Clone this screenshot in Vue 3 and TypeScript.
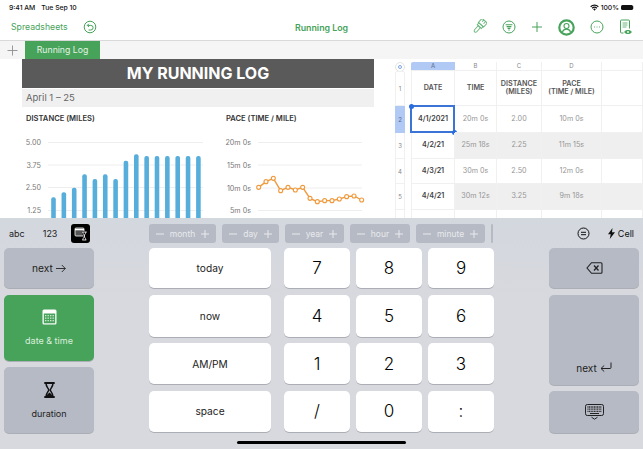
<template>
  <div class="ipad">
    <div class="status">
      <span>9:41 AM</span>
      <span class="date">Tue Sep 10</span>
      <span class="status-right">
        <svg width="9" height="7" viewBox="0 0 11 8"><path d="M0.300 2.600a7.300 7.300 0 0 1 10.400 0l-1 1a5.900 5.900 0 0 0-8.400 0zM2.100 4.400a4.800 4.800 0 0 1 6.800 0l-1 1a3.400 3.400 0 0 0-4.800 0zM3.900 6.200a2.200 2.200 0 0 1 3.200 0L5.500 7.900z" fill="#111" /></svg>
        <span>100%</span>
        <span class="battery"></span>
      </span>
    </div>

    <div class="toolbar">
      <div class="tb-left">
        <span>Spreadsheets</span>
        <svg width="14" height="14" viewBox="0 0 14 14" fill="none" stroke="#47a35a" stroke-width="1">
          <circle cx="7" cy="7" r="5.800" />
          <path d="M4.400 5.400h3.400a2.200 2.200 0 0 1 0 4.600H5.600M5.900 3.800 4.300 5.400l1.600 1.600" />
        </svg>
      </div>
      <div class="tb-title">Running Log</div>
      <div class="tb-right">
        <svg width="16" height="16" viewBox="0 0 16 16" fill="none" stroke="#6fb87f" stroke-width="1">
          <g transform="rotate(42 8 8)">
            <path d="M4.500 -0.500h7v5.500h-7zM6.800 -0.500v2.500M9.200 -0.500v3" />
            <path d="M5.200 5h5.600v2.500H5.200z" />
            <path d="M6.500 7.500h3v5.500a1.500 1.500 0 0 1-3 0z" />
          </g>
        </svg>
        <svg width="14" height="14" viewBox="0 0 14 14" fill="none" stroke="#47a35a" stroke-width="1">
          <circle cx="7" cy="7" r="6" />
          <path d="M3.600 4.800h6.800M4.600 6.600h4.800M5.600 8.400h2.800M6.300 10h1.400" stroke-width="1.100" />
        </svg>
        <svg width="12" height="12" viewBox="0 0 12 12" stroke="#47a35a" stroke-width="1"><path d="M6 1v10M1 6h10" /></svg>
        <svg width="17" height="17" viewBox="0 0 17 17" fill="none" stroke="#47a35a">
          <circle cx="8.500" cy="8.500" r="7.200" stroke-width="2.200" />
          <circle cx="8.500" cy="7" r="2.500" stroke-width="1.100" />
          <path d="M4.400 13c.7-2 2.200-2.900 4.100-2.900s3.400.9 4.100 2.900" stroke-width="1.100" />
        </svg>
        <svg width="14" height="14" viewBox="0 0 14 14" fill="none" stroke="#47a35a" stroke-width="1">
          <circle cx="7" cy="7" r="6" />
          <path d="M4 7h.8M6.600 7h.8M9.200 7h.8" stroke-width="1.200" />
        </svg>
        <svg width="14" height="16" viewBox="0 0 14 16" fill="none" stroke="#47a35a" stroke-width="1">
          <path d="M4.500 14H2.500a1 1 0 0 1-1-1V2a1 1 0 0 1 1-1h7a1 1 0 0 1 1 1v7.500" />
          <path d="M3.500 4h5M3.500 6h5M3.500 8h4" stroke-width="0.800" />
          <path d="M5.500 13c1.200-2 5.800-2 7 0-1.200 2-5.800 2-7 0z" fill="#47a35a" />
          <circle cx="9" cy="13" r="0.900" fill="#fff" stroke="none" />
        </svg>
      </div>
    </div>

    <div class="tabs">
      <svg class="tab-plus" width="11" height="11" viewBox="0 0 11 11" stroke="#8e8e8e" stroke-width="0.900"><path d="M5.500 0.500v10M0.500 5.500h10" /></svg>
      <div class="tab">Running Log</div>
    </div>

    <div class="sheet">
      <div class="report">
        <h1>MY RUNNING LOG</h1>
        <div class="subtitle">April 1 – 25</div>
        <div class="charts">
          <div class="chart chart-dist">
            <h2>DISTANCE (MILES)</h2>
            <svg width="200" height="95" viewBox="22 125 200 95">
              <g v-for="t in distTicks" :key="t.label">
                <line x1="48" x2="203" :y1="t.y" :y2="t.y" stroke="#eeeeee" stroke-width="1" />
                <text x="41" :y="t.y + 2.700" text-anchor="end" class="tick">{{ t.label }}</text>
              </g>
              <rect v-for="b in bars" :key="b.x" :x="b.x - 2.300" :y="b.y" width="4.600" :height="230 - b.y" rx="2" fill="#57aedb" />
            </svg>
          </div>
          <div class="chart chart-pace">
            <h2>PACE (TIME / MILE)</h2>
            <svg width="152" height="95" viewBox="222 125 152 95">
              <g v-for="t in paceTicks" :key="t.label">
                <line x1="258" x2="362" :y1="t.y" :y2="t.y" stroke="#eeeeee" stroke-width="1" />
                <text x="251" :y="t.y + 2.700" text-anchor="end" class="tick">{{ t.label }}</text>
              </g>
              <polyline :points="pacePoints" fill="none" stroke="#f09a3e" stroke-width="1.400" />
              <circle v-for="p in pace" :key="p[0]" :cx="p[0]" :cy="p[1]" r="2" fill="#fff" stroke="#f09a3e" stroke-width="1.100" />
            </svg>
          </div>
        </div>
      </div>

      <div class="table-wrap">
        <div class="corner-row">
          <span class="corner"><i></i></span>
          <div class="cols">
            <span v-for="(c, i) in columns" :key="c" class="col-head" :class="{ on: i === 0 }">{{ c }}</span>
            <span class="col-head"></span>
          </div>
        </div>
        <div class="body">
          <div class="row-heads">
            <span v-for="(r, i) in rows" :key="i" class="row-head" :class="{ on: i === 1 }" :style="{ height: r.h + 'px' }">{{ r.n }}</span>
          </div>
          <div class="grid">
            <div v-for="(r, i) in rows" :key="i" class="row" :class="{ head: i === 0, shade: i === 2 || i === 4 }" :style="{ height: r.h + 'px' }">
              <div v-for="(c, j) in r.cells" :key="j" class="cell" :class="{ first: j === 0 }">
                <span>{{ c }}</span>
                <div v-if="i === 1 && j === 0" class="selection">
                  <i class="handle tl"></i>
                  <i class="handle br"></i>
                </div>
              </div>
              <div class="cell"></div>
            </div>
          </div>
        </div>
      </div>
    </div>

    <div class="keyboard">
      <div class="strip">
        <div class="modes">
          <span>abc</span>
          <span>123</span>
          <span class="mode-on">
            <svg width="15" height="14" viewBox="0 0 15 14" fill="none">
              <rect x="2" y="1" width="9" height="8" rx="1" fill="#555" stroke="#fff" stroke-width="0.800" />
              <path d="M2 2.600h9" stroke="#fff" stroke-width="1.400" />
              <path d="M8.800 5h5M9.300 13h4M9.800 5c0 2.200 1.700 2.500 1.700 4s-1.700 1.800-1.700 4M12.800 5c0 2.200-1.700 2.500-1.700 4s1.700 1.800 1.700 4" stroke="#000" stroke-width="2.200" />
              <path d="M8.800 5h5M9.300 13h4M9.800 5c0 2.200 1.700 2.500 1.700 4s-1.700 1.800-1.700 4M12.800 5c0 2.200-1.700 2.500-1.700 4s1.700 1.800 1.700 4" stroke="#fff" stroke-width="0.800" />
            </svg>
          </span>
        </div>
        <div class="chips">
          <div v-for="c in chips" :key="c.label" class="chip" :style="{ width: c.w + 'px' }">
            <svg width="8" height="8" viewBox="0 0 8 8" stroke="#e8eaee" stroke-width="1"><path d="M0 4h8" /></svg>
            <span>{{ c.label }}</span>
            <svg width="8" height="8" viewBox="0 0 8 8" stroke="#e8eaee" stroke-width="1"><path d="M0 4h8M4 0v8" /></svg>
          </div>
          <div class="chip-more"></div>
        </div>
        <div class="strip-right">
          <svg width="13" height="13" viewBox="0 0 13 13" fill="none" stroke="#111" stroke-width="1"><circle cx="6.500" cy="6.500" r="5.500" /><path d="M4 5.300h5M4 7.700h5" /></svg>
          <span class="cell-mode">
            <svg width="7" height="11" viewBox="0 0 7 11"><path d="M4.500 0 0 6.300h2.700L1.800 11 7 4.300H4z" fill="#111" /></svg>
            Cell
          </span>
        </div>
      </div>

      <div class="keys">
        <div class="side">
          <button class="key gray k40">
            next
            <svg width="10" height="9" viewBox="0 0 10 9" fill="none" stroke="#222" stroke-width="0.900"><path d="M0 4.500h9.300M5.800 1l3.500 3.500L5.800 8" /></svg>
          </button>
          <button class="key green tall">
            <svg width="15" height="16" viewBox="0 0 15 16">
              <rect x="0.500" y="0.500" width="14" height="15" rx="1.500" fill="#fff" />
              <rect x="1.800" y="4.500" width="11.400" height="9.800" fill="#47a35a" />
              <g fill="#cfe8d3">
                <rect v-for="d in calDots" :key="d[0] + '-' + d[1]" :x="d[0]" :y="d[1]" width="1.400" height="1.300" />
              </g>
            </svg>
            <span>date &amp; time</span>
          </button>
          <button class="key gray tall">
            <svg width="11" height="16" viewBox="0 0 11 16" fill="none" stroke="#111">
              <path d="M0.300 1h10.400M0.300 15h10.400" stroke-width="1.800" />
              <path d="M2 1c0 4.500 2.700 5.200 2.700 7S2 10.500 2 15M9 1c0 4.500-2.700 5.200-2.700 7S9 10.500 9 15" stroke-width="1.500" />
              <path d="M2.500 14.500c.5-2.500 2-3 3-4 1 1 2.500 1.500 3 4z" fill="#111" stroke="none" />
            </svg>
            <span>duration</span>
          </button>
        </div>

        <div class="words">
          <button v-for="w in words" :key="w.label" class="key white" :style="{ height: w.h + 'px' }">{{ w.label }}</button>
        </div>

        <div class="numpad">
          <button v-for="n in numbers" :key="n.label" class="key white num" :style="{ height: n.h + 'px' }">{{ n.label }}</button>
        </div>

        <div class="side side-right">
          <button class="key gray k40">
            <svg width="17" height="12" viewBox="0 0 17 12" fill="none" stroke="#222" stroke-width="1.100">
              <path d="M5.500 0.700H15a1 1 0 0 1 1 1v8.600a1 1 0 0 1-1 1H5.500L1 6z" />
              <path d="M8 3.500 12.500 8.500M12.500 3.500 8 8.500" stroke-width="1.300" />
            </svg>
          </button>
          <button class="key gray k90">
            <span class="next-return">
              next
              <svg width="12" height="11" viewBox="0 0 12 11" fill="none" stroke="#222" stroke-width="1"><path d="M11 0.500v5a1 1 0 0 1-1 1H1M4.200 3.500 1 6.500l3.200 3" /></svg>
            </span>
          </button>
          <button class="key gray k42">
            <svg width="19" height="16" viewBox="0 0 19 16" fill="none" stroke="#222" stroke-width="1">
              <rect x="0.500" y="0.500" width="18" height="11" rx="1.800" />
              <path d="M2.500 3h14M2.500 5.200h14M2.500 7.400h14" stroke-dasharray="1 0.600" stroke-width="1.300" />
              <path d="M5 9.500h9" />
              <path d="M6.500 13.200l3 2 3-2" />
            </svg>
          </button>
        </div>
      </div>
      <div class="home"></div>
    </div>
  </div>
</template>

<script setup lang="ts">
const distTicks = [
  { label: '5.00', y: 142.5 },
  { label: '3.75', y: 165 },
  { label: '2.50', y: 187.5 },
  { label: '1.25', y: 210.5 },
];
const paceTicks = [
  { label: '20m 0s', y: 142.5 },
  { label: '15m 0s', y: 165 },
  { label: '10m 0s', y: 188 },
  { label: '5m 0s', y: 210.5 },
];

// tops were read off the zoomed screenshot (3x)
const barTops = [262, 247, 233, 193, 207, 193, 207, 152, 133, 138, 138, 138, 138, 138, 138];
const bars = barTops.map((t, i) => ({ x: 53.5 + i * 10.35, y: 110 + t / 3 }));

const paceRaw = [
  [776, 232], [798, 215], [820, 205], [842, 242], [864, 232], [886, 240], [908, 232], [930, 265],
  [952, 275], [974, 272], [996, 272], [1018, 267], [1040, 260], [1062, 258], [1085, 270],
];
const pace = paceRaw.map((p) => [p[0] / 3, 110 + p[1] / 3]);
const pacePoints = pace.map((p) => p.join(',')).join(' ');

const columns = ['A', 'B', 'C', 'D'];
const rows = [
  { n: '1', h: 35, cells: ['DATE', 'TIME', 'DISTANCE\n(MILES)', 'PACE\n(TIME / MILE)'] },
  { n: '2', h: 27, cells: ['4/1/2021', '20m 0s', '2.00', '10m 0s'] },
  { n: '3', h: 26, cells: ['4/2/21', '25m 18s', '2.25', '11m 15s'] },
  { n: '4', h: 25, cells: ['4/3/21', '30m 0s', '2.50', '12m 0s'] },
  { n: '5', h: 26, cells: ['4/4/21', '30m 12s', '3.25', '9m 18s'] },
  { n: '', h: 10, cells: ['', '', '', ''] },
];

const chips = [
  { label: 'month', w: 67 },
  { label: 'day', w: 57 },
  { label: 'year', w: 59 },
  { label: 'hour', w: 60 },
  { label: 'minute', w: 69 },
];

const words = [
  { label: 'today', h: 40 },
  { label: 'now', h: 42 },
  { label: 'AM/PM', h: 41 },
  { label: 'space', h: 41 },
];
const numbers = ['7', '8', '9', '4', '5', '6', '1', '2', '3', '/', '0', ':'].map((label, i) => ({
  label,
  h: words[Math.floor(i / 3)].h,
}));

const calDots: number[][] = [];
for (const y of [6, 8.5, 11]) {
  for (const x of [3, 5.5, 8, 10.5]) calDots.push([x, y]);
}
</script>

<style>
html,
body {
  margin: 0;
  background: #fff;
}
</style>

<style scoped>
.ipad {
  width: 643px;
  height: 449px;
  overflow: hidden;
  display: flex;
  flex-direction: column;
  background: #fff;
  font-family: Inter, "Liberation Sans", sans-serif;
  color: #111;
}

.status {
  height: 14px;
  flex: none;
  display: flex;
  align-items: center;
  padding: 0 9px;
  font-size: 6.8px;
  font-weight: 500;
}
.status .date {
  margin-left: 6px;
}
.status-right {
  margin-left: auto;
  display: flex;
  align-items: center;
  gap: 2px;
}
.battery {
  width: 12px;
  height: 5px;
  background: #111;
  border-radius: 1.5px;
  margin-right: 1px;
  box-shadow: 1.5px 0 0 -1px #888;
}

.toolbar {
  height: 26px;
  flex: none;
  display: grid;
  grid-template-columns: 1fr auto 1fr;
  align-items: center;
  padding: 0 11px;
  color: #47a35a;
  font-size: 8.7px;
  border-bottom: 1px solid #d9d9d9;
  box-sizing: content-box;
}
.tb-left {
  display: flex;
  align-items: center;
  gap: 15px;
}
.tb-title {
  font-weight: 600;
  font-size: 8.8px;
}
.tb-right {
  display: flex;
  align-items: center;
  justify-content: flex-end;
  gap: 15px;
  margin-right: -1px;
}

.tabs {
  height: 18px;
  flex: none;
  display: flex;
  align-items: stretch;
  background: #f5f5f5;
}
.tab-plus {
  align-self: center;
  margin: 0 7px;
}
.tab {
  width: 75px;
  background: #47a35a;
  color: #e4f3e6;
  font-size: 8.7px;
  display: flex;
  align-items: center;
  justify-content: center;
}

.sheet {
  height: 159px;
  flex: none;
  display: flex;
  overflow: hidden;
}
.report {
  width: 352px;
  margin-left: 22px;
  flex: none;
}
h1 {
  margin: 0;
  height: 29px;
  background: #5a5a5a;
  color: #fff;
  font-size: 16px;
  font-weight: 700;
  line-height: 29px;
  text-align: center;
}
.subtitle {
  margin-top: 1px;
  height: 18px;
  line-height: 18px;
  background: #f0f0f0;
  padding-left: 4px;
  font-size: 9.5px;
  color: #666;
}
.charts {
  display: flex;
}
.chart-dist {
  width: 200px;
}
.chart-pace {
  width: 152px;
}
h2 {
  margin: 0;
  padding: 7px 0 1px 4px;
  line-height: 10px;
  font-size: 7.6px;
  font-weight: 600;
  color: #333;
  white-space: nowrap;
}
.chart svg {
  display: block;
}
.tick {
  font-size: 7.2px;
  fill: #777;
}

.table-wrap {
  margin-left: 21px;
  flex: 1;
  padding-top: 3px;
  min-width: 0;
}
.corner-row {
  display: flex;
  height: 9px;
}
.corner {
  width: 10px;
  height: 10px;
  margin-top: -0.5px;
  border: 1px solid #e4e4e4;
  box-sizing: border-box;
  border-radius: 50%;
  display: flex;
  align-items: center;
  justify-content: center;
}
.corner i {
  width: 4px;
  height: 4px;
  box-sizing: border-box;
  border: 1px solid #7fa5e8;
  border-radius: 50%;
}
.cols {
  margin-left: 6px;
  flex: 1;
  display: grid;
  grid-template-columns: 44px 42px 45px 60px 1fr;
  border-bottom: 1px solid #f0f0f0;
  box-sizing: border-box;
}
.col-head {
  font-size: 6px;
  color: #8a8a8a;
  text-align: center;
  line-height: 8px;
  border-right: 1px solid #f0f0f0;
}
.col-head.on {
  background: #b1c9f5;
  color: #5b6b88;
  border-radius: 2px 0 0 0;
  border-right: 0;
}
.body {
  display: flex;
}
.row-heads {
  width: 10px;
  flex: none;
  display: flex;
  flex-direction: column;
}
.row-head {
  box-sizing: border-box;
  border: 1px solid #f0f0f0;
  border-top: 0;
  font-size: 6px;
  color: #888;
  display: flex;
  align-items: center;
  justify-content: center;
}
.row-head:first-child {
  border-top: 1px solid #f0f0f0;
  border-radius: 2px 2px 0 0;
}
.row-head.on {
  background: #b1c9f5;
  color: #5b6b88;
  border-color: #b1c9f5;
}
.grid {
  margin-left: 6px;
  flex: 1;
  display: flex;
  flex-direction: column;
  min-width: 0;
}
.row {
  display: grid;
  grid-template-columns: 44px 42px 45px 60px 1fr;
  box-sizing: border-box;
}
.cell {
  box-sizing: border-box;
  position: relative;
  display: flex;
  align-items: center;
  justify-content: center;
  text-align: center;
  white-space: pre-line;
  font-size: 7.2px;
  line-height: 8.3px;
  color: #969696;
  border-right: 1px solid #f0f0f0;
  border-bottom: 1px solid #f0f0f0;
}
.cell.first {
  color: #3f3f3f;
  font-weight: 600;
  border-left: 1px solid #f0f0f0;
}
.row.head .cell {
  color: #555;
  font-weight: 600;
}
.row.shade .cell:not(.first) {
  background: #efefef;
}
.selection {
  position: absolute;
  inset: -1px -1px -1px -2px;
  border: 2px solid #3a74d4;
}
.handle {
  position: absolute;
  width: 5px;
  height: 5px;
  border-radius: 50%;
  background: #2a6be0;
}
.handle.tl {
  left: -3.5px;
  top: -3.5px;
}
.handle.br {
  right: -3.5px;
  bottom: -3.5px;
}

.keyboard {
  flex: 1;
  position: relative;
  background: linear-gradient(#d3d7de, #d8d9de 40%);
  padding-top: 6px;
  box-sizing: border-box;
}
.strip {
  height: 19px;
  display: flex;
  align-items: center;
}
.modes {
  width: 149px;
  flex: none;
  display: flex;
  align-items: center;
  padding-left: 9px;
  box-sizing: border-box;
  gap: 18px;
  font-size: 9px;
  color: #222;
}
.mode-on {
  width: 19px;
  height: 19px;
  margin-left: -4px;
  background: #000;
  border-radius: 3px;
  display: flex;
  align-items: center;
  justify-content: center;
}
.chips {
  width: 345px;
  flex: none;
  display: flex;
  gap: 6px;
  height: 19px;
  overflow: hidden;
}
.chip {
  flex: none;
  background: #b6bac4;
  border-radius: 3px;
  color: #e8eaee;
  font-size: 8.5px;
  display: flex;
  align-items: center;
  justify-content: space-between;
  padding: 0 7px;
  box-sizing: border-box;
}
.chip-more {
  width: 2px;
  flex: none;
  background: #b6bac4;
  border-radius: 1px;
}
.strip-right {
  flex: 1;
  display: flex;
  align-items: center;
  justify-content: flex-end;
  padding-right: 9px;
  gap: 18px;
  font-size: 9px;
}
.cell-mode {
  display: flex;
  align-items: center;
  gap: 3px;
}

.keys {
  margin-top: 5px;
  display: flex;
  padding-left: 4px;
  align-items: flex-start;
}
.side {
  width: 90px;
  flex: none;
  display: flex;
  flex-direction: column;
  gap: 6.5px;
}
.words {
  width: 122px;
  margin-left: 55px;
  flex: none;
  display: flex;
  flex-direction: column;
  gap: 6.5px;
}
.numpad {
  width: 210px;
  margin-left: 13px;
  flex: none;
  display: grid;
  grid-template-columns: repeat(3, 66px);
  column-gap: 6px;
  row-gap: 6.5px;
}
.side-right {
  margin-left: 55px;
}
.key {
  border: 0;
  padding: 0;
  margin: 0;
  border-radius: 5px;
  font: inherit;
  color: #222;
  font-size: 10.2px;
  display: flex;
  align-items: center;
  justify-content: center;
  box-shadow: 0 1px 0 rgba(90, 95, 105, 0.35);
}
.white {
  background: #fff;
}
.gray {
  background: #b6bac4;
}
.green {
  background: #47a35a;
  color: #d9efdc;
}
.num {
  font-size: 17px;
  font-weight: 300;
  color: #000;
}
.k40 {
  height: 40px;
  gap: 3px;
}
.k42 {
  height: 42px;
}
.k90 {
  height: 90px;
  align-items: flex-end;
  padding-bottom: 11px;
  box-sizing: border-box;
}
.tall {
  height: 66px;
  flex-direction: column;
  gap: 10px;
  font-size: 9px;
}
.next-return {
  display: flex;
  align-items: center;
  gap: 3px;
  font-size: 10px;
}
.home {
  position: absolute;
  left: 237px;
  bottom: 5px;
  width: 169px;
  height: 3px;
  border-radius: 2px;
  background: #000;
}
</style>
